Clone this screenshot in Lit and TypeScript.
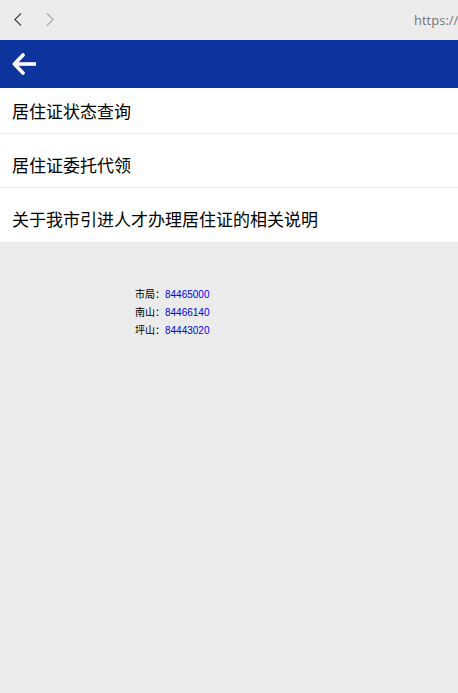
import { LitElement, html, css } from "lit";
import { customElement } from "lit/decorators.js";

const services = ["居住证状态查询", "居住证委托代领", "关于我市引进人才办理居住证的相关说明"];

const contacts = [
  { office: "市局", phone: "84465000" },
  { office: "南山", phone: "84466140" },
  { office: "坪山", phone: "84443020" },
];

@customElement("browser-bar")
class BrowserBar extends LitElement {
  static styles = css`
    :host {
      display: flex;
      align-items: center;
      height: 40px;
      background: #ececec;
    }
    button {
      display: grid;
      place-items: center;
      width: 32px;
      height: 40px;
      padding: 0;
      border: 0;
      background: none;
      color: #444;
    }
    button:disabled {
      color: #aaa;
    }
    svg {
      display: block;
      fill: none;
      stroke: currentColor;
      stroke-width: 1.2;
    }
    nav {
      display: flex;
      padding-left: 2px;
    }
    .address {
      box-sizing: border-box;
      width: 44px;
      height: 24px;
      margin-left: auto;
      padding: 0;
      border: 0;
      outline: 0;
      background: none;
      color: #767676;
      font: 13px/24px "Open Sans", "Noto Sans", sans-serif;
    }
  `;

  render() {
    return html`
      <nav>
        <button aria-label="后退">
          <svg width="8" height="14" viewBox="0 0 8 14"><path d="M7 .5 .8 6.5 7 12.5" /></svg>
        </button>
        <button aria-label="前进" disabled>
          <svg width="8" height="14" viewBox="0 0 8 14"><path d="M1 .5 7.2 6.5 1 12.5" /></svg>
        </button>
      </nav>
      <input class="address" type="text" aria-label="地址" value="https://r" />
    `;
  }
}

@customElement("app-root")
class AppRoot extends LitElement {
  static styles = css`
    :host {
      display: block;
      min-height: 100vh;
      background: #ebebeb;
      color: #000;
      font-family: "Liberation Sans", "Noto Sans CJK SC", sans-serif;
    }
    a {
      text-decoration: none;
    }
    .title-bar {
      display: flex;
      align-items: center;
      height: 48px;
      padding-left: 12px;
      background: #0c349c;
    }
    .back {
      padding: 0;
      border: 0;
      background: none;
      color: #fff;
    }
    .back svg {
      display: block;
      fill: none;
      stroke: currentColor;
      stroke-width: 3.6;
    }
    .services {
      display: flex;
      flex-direction: column;
      gap: 8px;
      margin: 0;
      padding: 0;
      list-style: none;
      background: #fff;
    }
    .service {
      border-bottom: 1px solid #ececec;
    }
    .service:last-child {
      border-bottom-color: #fff;
    }
    .service a {
      display: block;
      padding: 0 12px;
      color: #000;
      font-family: "Noto Sans CJK SC", sans-serif;
      font-size: 17px;
      line-height: 45px;
    }
    .contacts {
      margin: 0;
      padding: 44px 0 0 135px;
      list-style: none;
      font-size: 10px;
      line-height: 18px;
    }
    .contacts li {
      height: 18px;
    }
    .contacts a {
      color: #00e;
    }
  `;

  render() {
    return html`
      <browser-bar></browser-bar>
      <header class="title-bar">
        <button class="back" aria-label="返回">
          <svg width="24" height="22" viewBox="0 0 24 22">
            <path d="M3 11h21" />
            <path d="M11 2 2.4 11l8.6 9" stroke-linecap="round" stroke-linejoin="round" />
          </svg>
        </button>
      </header>
      <main>
        <ul class="services">
          ${services.map((name) => html`<li class="service"><a href="#">${name}</a></li>`)}
        </ul>
        <ul class="contacts">
          ${contacts.map(
            (c) => html`<li>${c.office}：<a href="tel:${c.phone}">${c.phone}</a></li>`
          )}
        </ul>
      </main>
    `;
  }
}
